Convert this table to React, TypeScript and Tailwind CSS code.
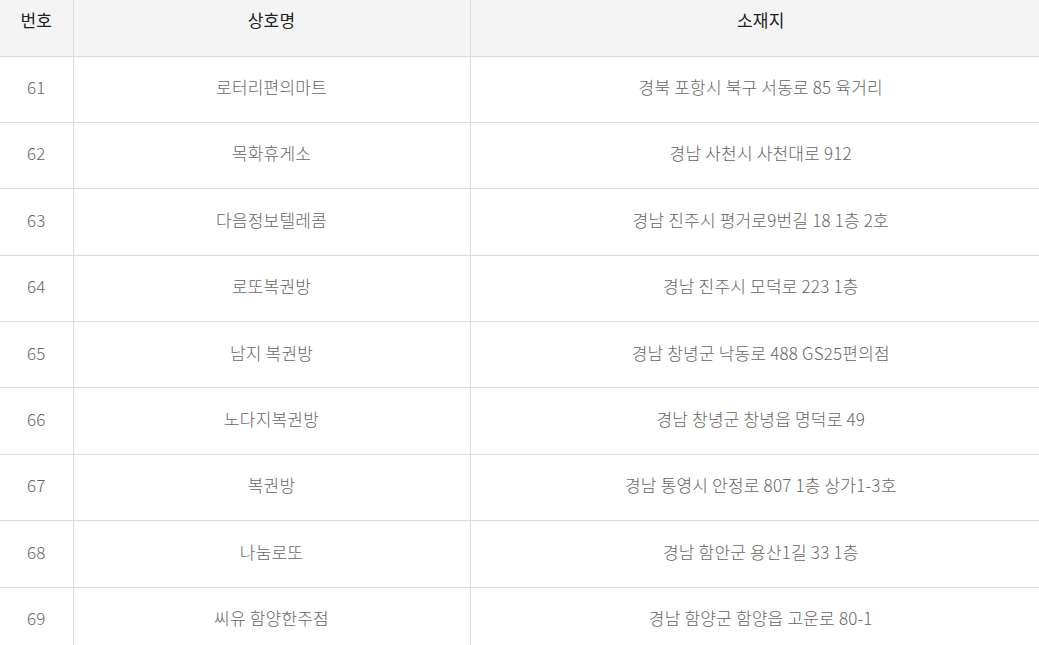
import React from "react";

const rows = [
  { no: 61, name: "로터리편의마트", addr: "경북 포항시 북구 서동로 85 육거리" },
  { no: 62, name: "목화휴게소", addr: "경남 사천시 사천대로 912" },
  { no: 63, name: "다음정보텔레콤", addr: "경남 진주시 평거로9번길 18 1층 2호" },
  { no: 64, name: "로또복권방", addr: "경남 진주시 모덕로 223 1층" },
  { no: 65, name: "남지 복권방", addr: "경남 창녕군 낙동로 488 GS25편의점" },
  { no: 66, name: "노다지복권방", addr: "경남 창녕군 창녕읍 명덕로 49" },
  { no: 67, name: "복권방", addr: "경남 통영시 안정로 807 1층 상가1-3호" },
  { no: 68, name: "나눔로또", addr: "경남 함안군 용산1길 33 1층" },
  { no: 69, name: "씨유 함양한주점", addr: "경남 함양군 함양읍 고운로 80-1" },
];

export default function App() {
  return (
    <div className="w-[1039px] h-[645px] overflow-hidden bg-white font-['Noto_Sans_CJK_KR',sans-serif] tracking-[0.2px]">
      <table className="w-[1051px] border-collapse table-fixed">
        <colgroup>
          <col className="w-[73px]" />
          <col className="w-[397px]" />
          <col />
        </colgroup>
        <thead>
          <tr className="bg-[#f4f4f4] h-[56px] text-[#222] text-[17px]">
            <th className="font-normal border-b border-r border-[#dcdcdc] align-top pt-[7px]">번호</th>
            <th className="font-normal border-b border-r border-[#dcdcdc] align-top pt-[7px]">상호명</th>
            <th className="font-normal border-b border-[#dcdcdc] align-top pt-[7px]">소재지</th>
          </tr>
        </thead>
        <tbody className="text-[17px] text-[#666] font-light">
          {rows.map((r) => (
            <tr key={r.no} className="h-[66.4px]">
              <td className="text-center border-b border-r border-[#dcdcdc] pb-[5px]">{r.no}</td>
              <td className="text-center border-b border-r border-[#dcdcdc] pb-[5px]">{r.name}</td>
              <td className="text-center border-b border-[#dcdcdc] pb-[5px]">{r.addr}</td>
            </tr>
          ))}
        </tbody>
      </table>
    </div>
  );
}
